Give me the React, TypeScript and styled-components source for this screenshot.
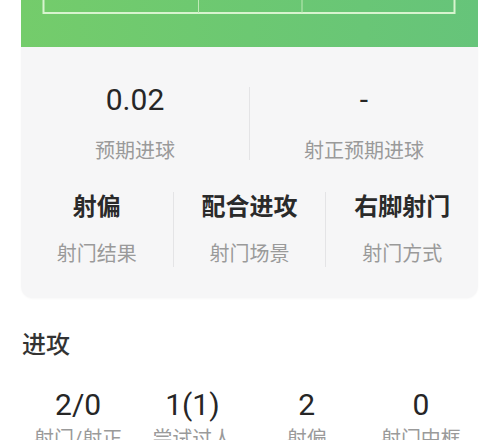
import React from 'react';
import styled, { createGlobalStyle } from 'styled-components';

const GlobalStyle = createGlobalStyle`
    body {
        margin: 0;
        background: #ffffff;
        font-family: Roboto, "Noto Sans CJK SC", sans-serif;
        color: #333333;
    }
`;

const Page = styled.div`
    width: 457px;
    margin-left: 21px;
`;

const Pitch = styled.div`
    height: 47px;
    background: linear-gradient(90deg, #74cc6b 0%, #6cc872 50%, #66c47a 100%);
    svg {
        display: block;
    }
`;

const Card = styled.div`
    background: #f6f6f7;
    border-radius: 0 0 12px 12px;
    padding: 35px 0 30px;
    box-shadow: 0 1px 2px rgba(0, 0, 0, 0.03);
`;

const Row = styled.div<{ $gap?: number }>`
    display: flex;
    align-items: stretch;
    margin-top: ${(p) => p.$gap ?? 0}px;
`;

const Cell = styled.div`
    flex: 1;
    display: flex;
    flex-direction: column;
    align-items: center;
`;

const Divider = styled.div<{ $inset: number }>`
    width: 1px;
    background: #e4e4e6;
    margin: ${(p) => p.$inset}px 0;
`;

const BigValue = styled.div`
    font-size: 30px;
    line-height: 36px;
    color: #262626;
`;

const WordValue = styled.div`
    font-size: 24px;
    line-height: 32px;
    font-weight: 700;
    color: #2a2a2a;
`;

const Label = styled.div<{ $top: number }>`
    font-size: 20px;
    line-height: 28px;
    color: #9a9a9a;
    margin-top: ${(p) => p.$top}px;
`;

const SectionTitle = styled.div`
    font-size: 24px;
    line-height: 32px;
    font-weight: 500;
    color: #333;
    margin: 31px 0 0 1px;
`;

const StatGrid = styled.div`
    display: grid;
    grid-template-columns: repeat(4, 1fr);
    margin-top: 27px;
`;

const Stat = styled.div`
    display: flex;
    flex-direction: column;
    align-items: center;
`;

const StatValue = styled.div`
    font-size: 30px;
    line-height: 34px;
    color: #262626;
`;

const StatLabel = styled.div`
    font-size: 20px;
    line-height: 26px;
    color: #9a9a9a;
    margin-top: 4px;
`;

const expected = [
    { value: '0.02', label: '预期进球' },
    { value: '-', label: '射正预期进球' },
];

const shotInfo = [
    { value: '射偏', label: '射门结果' },
    { value: '配合进攻', label: '射门场景' },
    { value: '右脚射门', label: '射门方式' },
];

const attack = [
    { value: '2/0', label: '射门/射正' },
    { value: '1(1)', label: '尝试过人' },
    { value: '2', label: '射偏' },
    { value: '0', label: '射门中框' },
];

function PitchLines() {
    return (
        <svg width="457" height="47" viewBox="0 0 457 47">
            <rect x="22.5" y="-40" width="411" height="53" fill="none" stroke="#d8f4cf" strokeWidth="2" />
            <line x1="177.5" y1="0" x2="177.5" y2="13" stroke="#bfeab6" strokeWidth="1" />
            <line x1="281" y1="0" x2="281" y2="13" stroke="#bfeab6" strokeWidth="1" />
        </svg>
    );
}

export default function App() {
    return (
        <Page>
            <GlobalStyle />
            <Pitch>
                <PitchLines />
            </Pitch>
            <Card>
                <Row>
                    {expected.map((item, i) => (
                        <React.Fragment key={item.label}>
                            {i > 0 && <Divider $inset={5} />}
                            <Cell>
                                <BigValue>{item.value}</BigValue>
                                <Label $top={19}>{item.label}</Label>
                            </Cell>
                        </React.Fragment>
                    ))}
                </Row>
                <Row $gap={26}>
                    {shotInfo.map((item, i) => (
                        <React.Fragment key={item.label}>
                            {i > 0 && <Divider $inset={1} />}
                            <Cell>
                                <WordValue>{item.value}</WordValue>
                                <Label $top={17}>{item.label}</Label>
                            </Cell>
                        </React.Fragment>
                    ))}
                </Row>
            </Card>
            <SectionTitle>进攻</SectionTitle>
            <StatGrid>
                {attack.map((s) => (
                    <Stat key={s.label}>
                        <StatValue>{s.value}</StatValue>
                        <StatLabel>{s.label}</StatLabel>
                    </Stat>
                ))}
            </StatGrid>
        </Page>
    );
}
